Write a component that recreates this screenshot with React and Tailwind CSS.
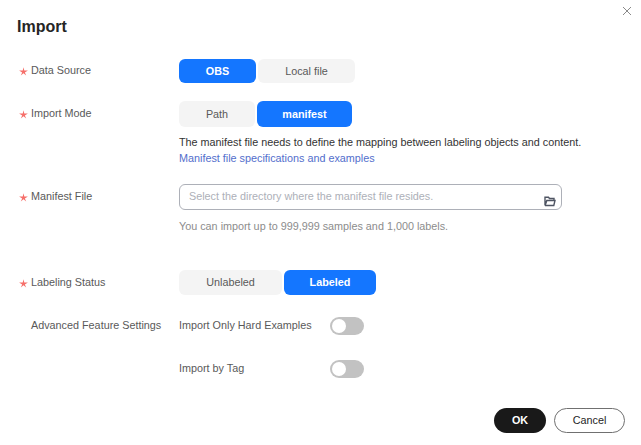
const Star = () => (
  <svg width="9" height="9" viewBox="0 0 8 8" className="absolute left-[19px] top-[7px]">
    <path d="M4 0.2 L4.7 3.2 L7.9 3.2 L5.2 4.8 L6.4 7.6 L4 5.6 L1.6 7.6 L2.8 4.8 L0.1 3.2 L3.3 3.2 Z" fill="#f66f6a" />
  </svg>
);

const Label = ({ required, children }) => (
  <div className="relative w-[179px] shrink-0 pl-[31px] pb-[2px] leading-[20px] text-[#595959]">
    {required && <Star />}
    {children}
  </div>
);

const Toggle = ({ items }) => (
  <div className="flex gap-[2px]">
    {items.map((item) => (
      <div
        key={item.label}
        style={{ width: item.width }}
        className={
          item.active
            ? "flex h-full items-center justify-center rounded-[6px] bg-[#1476ff] font-bold text-white"
            : "flex h-full items-center justify-center rounded-[6px] bg-[#f4f4f4] text-[#595959]"
        }
      >
        {item.label}
      </div>
    ))}
  </div>
);

const Switch = () => (
  <div className="flex h-[18px] w-[34px] items-center rounded-full bg-[#c2c2c2] pl-[2px]">
    <div className="h-[14px] w-[14px] rounded-full bg-white" />
  </div>
);

const App = () => {
  return (
    <div className="relative h-[445px] w-[641px] overflow-hidden bg-white font-['Liberation_Sans',Arial,sans-serif] text-[10.8px]">
      <button className="absolute right-[9px] top-[6px] text-[#8a8a8a]">
        <svg width="10" height="10" viewBox="0 0 10 10" fill="none" stroke="currentColor" strokeWidth="1">
          <path d="M1 1 L9 9 M9 1 L1 9" />
        </svg>
      </button>

      <h2 className="pl-[17px] pt-[17px] text-[16px] font-bold leading-[20px] text-[#252525]">Import</h2>

      <div className="mt-[22px] flex h-[24px] items-center">
        <Label required>Data Source</Label>
        <div className="flex h-[24px]">
          <Toggle items={[{ label: "OBS", width: 77, active: true }, { label: "Local file", width: 97 }]} />
        </div>
      </div>

      <div className="mt-[18px] flex">
        <div className="pt-[2px]">
          <Label required>Import Mode</Label>
        </div>
        <div>
          <div className="flex h-[26px]">
            <Toggle items={[{ label: "Path", width: 76 }, { label: "manifest", width: 95, active: true }]} />
          </div>
          <p className="mt-[8px] leading-[15px] text-[#333333]">
            The manifest file needs to define the mapping between labeling objects and content.
          </p>
          <a className="mt-[1px] block leading-[15px] text-[#526ecc]">Manifest file specifications and examples</a>
        </div>
      </div>

      <div className="mt-[18px] flex">
        <div className="pt-[2px]">
          <Label required>Manifest File</Label>
        </div>
        <div>
          <div className="relative flex h-[26px] w-[383px] items-center rounded-[6px] border border-[#adb0b8] pb-[1px] pl-[9px] text-[#adb0b8]">
            Select the directory where the manifest file resides.
            <svg width="12" height="11" viewBox="0 0 12 11" fill="none" stroke="#4f5563" strokeWidth="1.4" className="absolute right-[5px] top-[11px]">
              <path d="M1 9.5 V1.2 H4.5 L5.5 2.5 H10 V4.5 M1 9.5 H9.8 L11 4.5 H2.8 L1.2 9.2" />
            </svg>
          </div>
          <p className="mt-[9px] leading-[15px] text-[#8c8c8c]">You can import up to 999,999 samples and 1,000 labels.</p>
        </div>
      </div>

      <div className="mt-[36px] flex h-[25px] items-center">
        <Label required>Labeling Status</Label>
        <div className="flex h-[25px]">
          <Toggle items={[{ label: "Unlabeled", width: 103 }, { label: "Labeled", width: 92, active: true }]} />
        </div>
      </div>

      <div className="mt-[22px] flex h-[18px] items-center">
        <Label>Advanced Feature Settings</Label>
        <div className="w-[151px] pb-[2px] text-[#595959]">Import Only Hard Examples</div>
        <Switch />
      </div>

      <div className="mt-[25px] flex h-[18px] items-center">
        <div className="w-[179px] shrink-0" />
        <div className="w-[151px] pb-[2px] text-[#595959]">Import by Tag</div>
        <Switch />
      </div>

      <div className="mt-[30px] flex justify-end gap-[8px] pr-[16px]">
        <button className="h-[25px] w-[52px] rounded-full bg-[#191919] font-bold text-white">OK</button>
        <button className="h-[25px] w-[71px] rounded-full border border-[#707070] bg-white text-[#252525]">Cancel</button>
      </div>
    </div>
  );
};

export default App;
